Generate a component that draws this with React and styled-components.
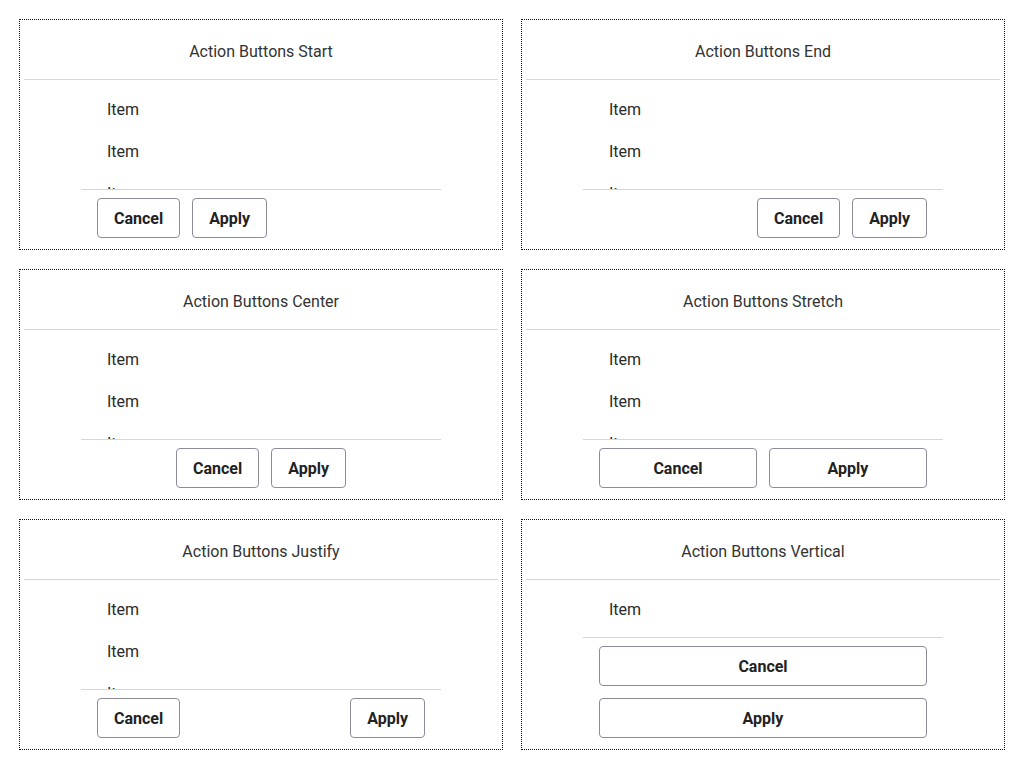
import React from 'react'
import styled, { createGlobalStyle, css } from 'styled-components'

const GlobalStyle = createGlobalStyle`
  * { box-sizing: border-box; }
  body {
    margin: 0;
    background: #ffffff;
    font-family: Roboto, "Liberation Sans", sans-serif;
  }
`

const Page = styled.div`
  display: grid;
  grid-template-columns: 484px 484px;
  grid-auto-rows: 231px;
  column-gap: 18px;
  row-gap: 19px;
  padding: 19px;
`

const Card = styled.div`
  border: 1px dotted #111;
  padding: 0 4px;
  display: flex;
  flex-direction: column;
  min-height: 0;
  overflow: hidden;
`

const Header = styled.div`
  height: 60px;
  flex: none;
  display: flex;
  align-items: center;
  justify-content: center;
  padding-top: 4px;
  border-bottom: 1px solid #d6d6d6;
  font-size: 16px;
  color: #333;
`

const Body = styled.div`
  width: 360px;
  margin: 0 auto;
  flex: 1;
  min-height: 0;
  display: flex;
  flex-direction: column;
`

const List = styled.ul`
  list-style: none;
  margin: 0;
  padding: 8px 0 0;
  flex: 1;
  min-height: 0;
  overflow: hidden;
`

const ListItem = styled.li`
  height: 42px;
  display: flex;
  align-items: center;
  padding-left: 26px;
  font-size: 16px;
  color: #2a2a2a;
`

const Actions = styled.div`
  flex: none;
  border-top: 1px solid #d6d6d6;
  padding: 8px 16px 11px;
  display: flex;
  gap: 12px;
  ${({ $mode }) => $mode === 'start' && css`justify-content: flex-start;`}
  ${({ $mode }) => $mode === 'end' && css`justify-content: flex-end;`}
  ${({ $mode }) => $mode === 'center' && css`justify-content: center;`}
  ${({ $mode }) => $mode === 'justify' && css`justify-content: space-between;`}
  ${({ $mode }) => $mode === 'vertical' && css`flex-direction: column;`}
`

const Button = styled.button`
  height: 40px;
  padding: 0 16px;
  border: 1px solid #8e8b98;
  border-radius: 4px;
  background: #fff;
  font-family: Roboto, "Liberation Sans", sans-serif;
  font-weight: 700;
  font-size: 16px;
  color: #222;
  cursor: pointer;
  ${({ $grow }) => $grow && css`flex: 1;`}
`

const demos = [
  { title: 'Action Buttons Start', mode: 'start' },
  { title: 'Action Buttons End', mode: 'end' },
  { title: 'Action Buttons Center', mode: 'center' },
  { title: 'Action Buttons Stretch', mode: 'stretch' },
  { title: 'Action Buttons Justify', mode: 'justify' },
  { title: 'Action Buttons Vertical', mode: 'vertical' },
]

const Demo = ({ title, mode }) => {
  const grow = mode === 'stretch'
  return (
    <Card>
      <Header>{title}</Header>
      <Body>
        <List>
          <ListItem>Item</ListItem>
          <ListItem>Item</ListItem>
          <ListItem>Item</ListItem>
          <ListItem>Item</ListItem>
        </List>
        <Actions $mode={mode}>
          <Button $grow={grow}>Cancel</Button>
          <Button $grow={grow}>Apply</Button>
        </Actions>
      </Body>
    </Card>
  )
}

const App = () => {
  return (
    <>
      <GlobalStyle />
      <Page>
        {demos.map((d) => (
          <Demo key={d.mode} title={d.title} mode={d.mode} />
        ))}
      </Page>
    </>
  )
}

export default App
